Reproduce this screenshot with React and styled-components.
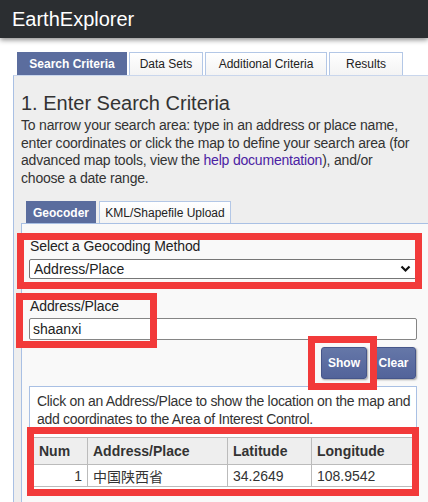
import React from 'react';
import styled, { createGlobalStyle } from 'styled-components';

const GlobalStyle = createGlobalStyle`
  html, body {
    margin: 0;
    padding: 0;
    background: #ffffff;
    overflow: hidden;
  }
  body {
    font-family: "Liberation Sans", Arial, sans-serif;
    color: #333;
  }
`;

const Page = styled.div`
  width: 428px;
  height: 502px;
  overflow: hidden;
`;

const Header = styled.header`
  height: 38px;
  background: #2b2e31;
  box-shadow: 0 2px 5px rgba(0, 0, 0, 0.45);
  display: flex;
  align-items: center;
  padding-left: 12px;
  position: relative;
  z-index: 2;
  h1 {
    margin: 0;
    font-size: 20px;
    font-weight: normal;
    color: #ffffff;
    line-height: 24px;
  }
`;

const Main = styled.div`
  padding-top: 14px;
`;

const TabRow = styled.div`
  display: flex;
  gap: ${props => props.gap}px;
  margin-left: ${props => props.indent}px;
`;

const Tab = styled.div`
  box-sizing: border-box;
  width: ${props => props.width}px;
  height: ${props => props.height}px;
  display: flex;
  align-items: center;
  justify-content: center;
  font-size: 12px;
  font-weight: ${props => (props.active ? 'bold' : 'normal')};
  color: ${props => (props.active ? '#ffffff' : '#222')};
  background: ${props =>
    props.active ? '#5b6d9e' : 'linear-gradient(#ffffff, #f3f3f3)'};
  border: 1px solid ${props => (props.active ? '#5b6d9e' : '#b3c7e6')};
  border-bottom: none;
`;

const Panel = styled.section`
  margin-left: 13px;
  border-left: 1px solid #a9c0e4;
  border-top: 1px solid #c9d6ec;
  background: #eeeeee;
  padding: 16px 0 0 7px;
  height: 430px;
`;

const Title = styled.h2`
  margin: 0;
  font-size: 20px;
  font-weight: normal;
  line-height: 23px;
  color: #333;
`;

const Intro = styled.p`
  margin: 2px 0 0 0;
  padding-right: 8px;
  font-size: 14px;
  line-height: 17.5px;
  letter-spacing: -0.2px;
  color: #333;
  a {
    color: #4b22a3;
    text-decoration: none;
  }
`;

const SubTabs = styled.div`
  margin-top: 14px;
`;

const GeoBox = styled.div`
  border: 1px solid #a9c0e4;
  background: #f9f9f9;
  margin-right: -4px;
  padding: 14px 14px 12px 7px;
  height: 300px;
`;

const Field = styled.div`
  position: relative;
  margin-top: ${props => props.top || 0}px;
`;

const Label = styled.label`
  display: block;
  font-size: 14px;
  line-height: 16px;
  letter-spacing: -0.1px;
  color: #222;
  padding-left: 1px;
`;

const SelectBox = styled.div`
  position: relative;
  margin-top: 5px;
`;

const Select = styled.select`
  appearance: none;
  display: block;
  box-sizing: border-box;
  width: 100%;
  height: 20px;
  border: 1px solid #767676;
  border-radius: 2px;
  background: #ffffff;
  font-family: "Liberation Sans", Arial, sans-serif;
  font-size: 14px;
  color: #222;
  padding: 0 0 0 4px;
  line-height: 18px;
`;

const Chevron = styled.svg`
  position: absolute;
  right: 6px;
  top: 6px;
  pointer-events: none;
`;

const Input = styled.input`
  display: block;
  box-sizing: border-box;
  width: 100%;
  height: 22px;
  margin-top: 4px;
  border: 1px solid #858585;
  border-radius: 2px;
  background: #ffffff;
  font-family: "Liberation Sans", Arial, sans-serif;
  font-size: 14px;
  color: #222;
  padding: 0 0 0 3px;
  outline: none;
`;

const Buttons = styled.div`
  display: flex;
  justify-content: flex-end;
  gap: 4px;
  margin-top: 7px;
  padding-right: 1px;
`;

const ButtonWrap = styled.div`
  position: relative;
`;

const Button = styled.button`
  box-sizing: border-box;
  width: ${props => props.width}px;
  height: 32px;
  padding: 0;
  border: 1px solid #46568a;
  border-radius: 3px;
  background: linear-gradient(#6577a8, #52639a);
  box-shadow: 1px 1px 2px rgba(0, 0, 0, 0.35);
  color: #ffffff;
  font-family: "Liberation Sans", Arial, sans-serif;
  font-size: 12px;
  font-weight: bold;
`;

const Results = styled.div`
  margin-top: 7px;
  border: 1px solid #a9c0e4;
  background: #ffffff;
  padding: 5px 3px 3px 3px;
  p {
    margin: 0 -3px 9px 0;
    padding-left: 4px;
    font-size: 14px;
    line-height: 18px;
    letter-spacing: -0.3px;
    color: #333;
  }
`;

const TableWrap = styled.div`
  position: relative;
`;

const Table = styled.table`
  width: 380px;
  table-layout: fixed;
  border-collapse: collapse;
  border: 1px solid #bbbbbb;
  font-size: 14px;
  color: #333;
  th, td {
    border: 1px solid #bbbbbb;
    padding: 0 5px;
    text-align: left;
  }
  th {
    height: 26px;
    background: #eeeeee;
    font-weight: bold;
  }
  td {
    height: 21px;
    background: #ffffff;
  }
  td.num {
    text-align: right;
  }
  td.cjk {
    font-family: "Liberation Sans", "Noto Sans CJK SC", sans-serif;
  }
`;

const Highlight = styled.div`
  position: absolute;
  box-sizing: border-box;
  top: ${props => props.t}px;
  left: ${props => props.l}px;
  ${props => (props.w ? `width: ${props.w}px;` : `right: ${props.r}px;`)}
  bottom: ${props => props.b}px;
  border: 7px solid #f23a3a;
  pointer-events: none;
  z-index: 3;
`;

const App = () => {
  return (
    <Page>
      <GlobalStyle />
      <Header>
        <h1>EarthExplorer</h1>
      </Header>
      <Main>
        <TabRow gap={2} indent={17}>
          <Tab active width={110} height={23}>Search Criteria</Tab>
          <Tab width={74} height={23}>Data Sets</Tab>
          <Tab width={122} height={23}>Additional Criteria</Tab>
          <Tab width={74} height={23}>Results</Tab>
        </TabRow>
        <Panel>
          <Title>1. Enter Search Criteria</Title>
          <Intro>
            To narrow your search area: type in an address or place name, enter
            coordinates or click the map to define your search area (for
            advanced map tools, view the <a href="#help">help documentation</a>
            ), and/or choose a date range.
          </Intro>
          <SubTabs>
            <TabRow gap={3} indent={5}>
              <Tab active width={70} height={22}>Geocoder</Tab>
              <Tab width={132} height={22}>KML/Shapefile Upload</Tab>
            </TabRow>
            <GeoBox>
              <Field>
                <Label>Select a Geocoding Method</Label>
                <SelectBox>
                  <Select defaultValue="address">
                    <option value="address">Address/Place</option>
                  </Select>
                  <Chevron width="11" height="8" viewBox="0 0 11 8">
                    <polyline
                      points="1.5,1.5 5.5,5.5 9.5,1.5"
                      fill="none"
                      stroke="#111"
                      strokeWidth="2.2"
                    />
                  </Chevron>
                </SelectBox>
                <Highlight t={-5} l={-12} r={-5} b={-10} />
              </Field>
              <Field top={19}>
                <Label>Address/Place</Label>
                <Input defaultValue="shaanxi" />
                <Highlight t={-5} l={-13} w={141} b={-8} />
              </Field>
              <Buttons>
                <ButtonWrap>
                  <Button width={46}>Show</Button>
                  <Highlight t={-11} l={-13} r={-10} b={-11} />
                </ButtonWrap>
                <Button width={45}>Clear</Button>
              </Buttons>
              <Results>
                <p>
                  Click on an Address/Place to show the location on the map and
                  add coordinates to the Area of Interest Control.
                </p>
                <TableWrap>
                  <Table>
                    <colgroup>
                      <col style={{ width: 54 }} />
                      <col style={{ width: 140 }} />
                      <col style={{ width: 84 }} />
                      <col style={{ width: 102 }} />
                    </colgroup>
                    <thead>
                      <tr>
                        <th>Num</th>
                        <th>Address/Place</th>
                        <th>Latitude</th>
                        <th>Longitude</th>
                      </tr>
                    </thead>
                    <tbody>
                      <tr>
                        <td className="num">1</td>
                        <td className="cjk">中国陕西省</td>
                        <td>34.2649</td>
                        <td>108.9542</td>
                      </tr>
                    </tbody>
                  </Table>
                  <Highlight t={-10} l={-6} r={-6} b={-9} />
                </TableWrap>
              </Results>
            </GeoBox>
          </SubTabs>
        </Panel>
      </Main>
    </Page>
  );
};

export default App;
